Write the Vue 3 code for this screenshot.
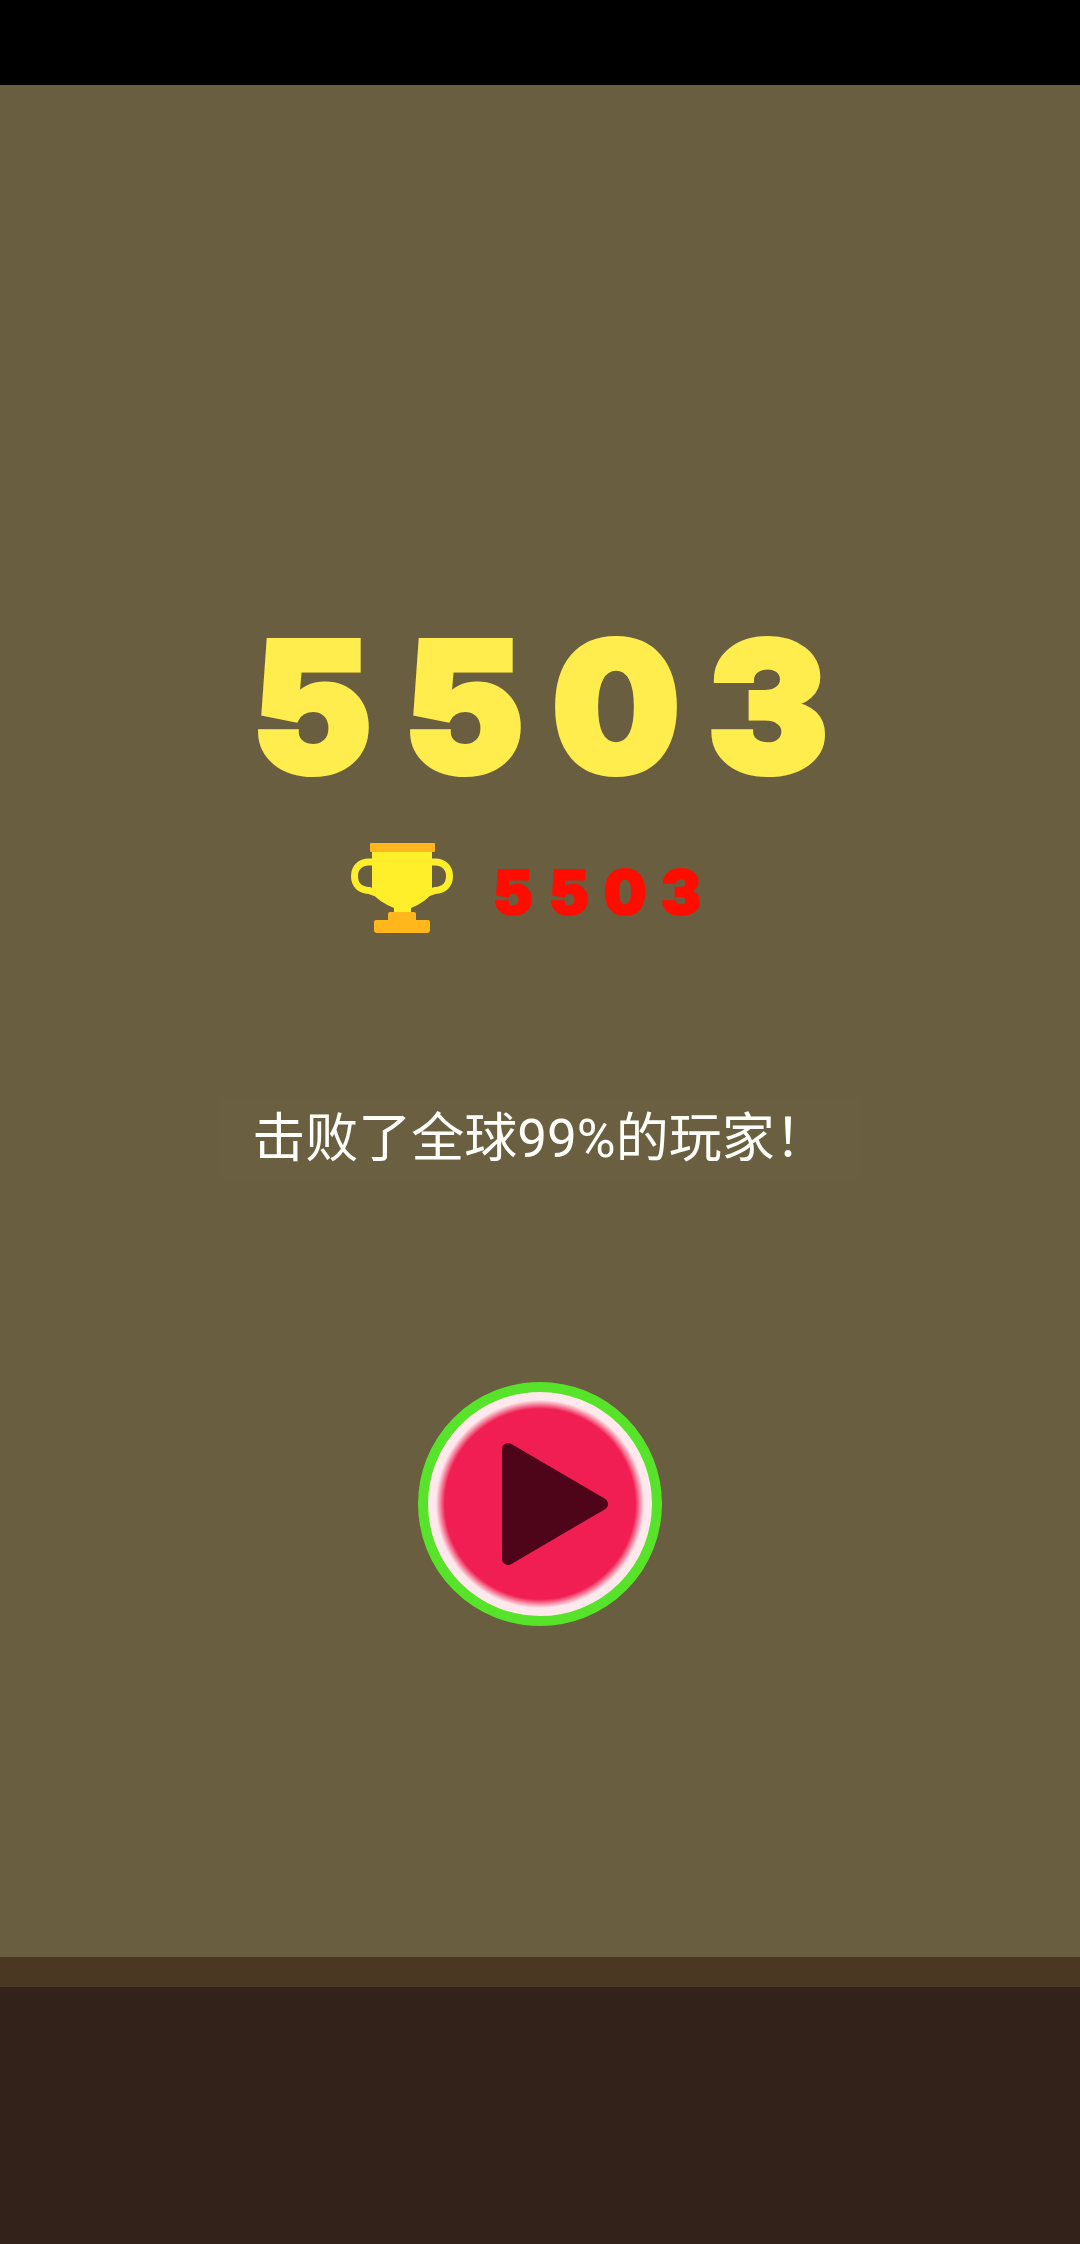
<script setup>
const score = 5503
const best = 5503
const digits = (value) => String(value).split('')
</script>

<template>
  <div class="screen">
    <div class="status-bar"></div>
    <main class="stage">
      <h1 class="score"><span v-for="(d, i) in digits(score)" :key="i">{{ d }}</span></h1>
      <div class="best">
        <svg class="trophy" viewBox="0 0 102 90" aria-hidden="true">
          <g fill="none" stroke="#ffef2b" stroke-width="7">
            <path d="M23 19H18C9 19 3.500 25 3.500 33C3.500 42 9 47 18 47.500L25 50" />
            <path d="M79 19H84C93 19 98.500 25 98.500 33C98.500 42 93 47 84 47.500L77 50" />
          </g>
          <path fill="#ffef2b" d="M21 7H81V50Q75 59 60 65V71H43V65Q28 59 21 50Z" />
          <rect x="19" width="65" height="9" rx="1" fill="#ffb71c" />
          <path fill="#ffb71c" d="M39 69H63Q65 69 65 71V77H77Q79 77 79 79V87Q79 90 76 90H26Q23 90 23 87V79Q23 77 25 77H37V71Q37 69 39 69Z" />
        </svg>
        <p class="best-score"><span v-for="(d, i) in digits(best)" :key="i">{{ d }}</span></p>
      </div>
      <p class="rank">击败了全球99%的玩家！</p>
      <button class="play" type="button" aria-label="Play">
        <svg viewBox="0 0 106 122" aria-hidden="true">
          <path d="M6 6L100 61L6 116Z" fill="#4e0519" stroke="#4e0519" stroke-width="12" stroke-linejoin="round" />
        </svg>
      </button>
    </main>
    <div class="ledge"></div>
    <div class="ground"></div>
  </div>
</template>

<style>
body {
  margin: 0;
  background: #695e40;
}
</style>

<style scoped>
.screen {
  display: flex;
  flex-direction: column;
  min-height: 100vh;
  background: #695e40;
}

.status-bar {
  height: 85px;
  background: #000;
}

.stage {
  flex: 1;
  display: flex;
  flex-direction: column;
  align-items: center;
  padding-top: 520px;
}

.score,
.best-score {
  display: flex;
  margin: 0;
  font-family: Inter, sans-serif;
  font-weight: 900;
  text-align: center;
  -webkit-text-stroke-color: currentColor;
  stroke-linejoin: round;
}

.score {
  font-size: 180px;
  line-height: 204px;
  color: #ffed4d;
  -webkit-text-stroke-width: 6px;
}

.score span {
  width: 152px;
}

.best {
  display: flex;
  align-items: center;
  gap: 32px;
  margin-top: 34px;
  padding-right: 20px;
}

.trophy {
  width: 102px;
  height: 90px;
}

.best-score {
  padding-top: 8px;
  font-size: 60px;
  line-height: 80px;
  color: #ff0d00;
  -webkit-text-stroke-width: 2px;
}

.best-score span {
  width: 56px;
}

.rank {
  margin: 166px 0 0;
  padding: 0 32px;
  font-family: Roboto, "Noto Sans CJK SC", sans-serif;
  font-size: 53px;
  line-height: 81px;
  color: #fffefa;
  background: #6a6041;
}

.play {
  display: flex;
  align-items: center;
  justify-content: center;
  box-sizing: border-box;
  width: 244px;
  height: 244px;
  margin-top: 202px;
  padding: 0 0 0 30px;
  border: 10px solid #57e329;
  border-radius: 50%;
  background: radial-gradient(circle closest-side, #f01e52 85%, #ffe9ec 93%);
  cursor: pointer;
}

.play svg {
  width: 106px;
  height: 122px;
}

.ledge {
  height: 30px;
  background: #4a3822;
}

.ground {
  height: 257px;
  background: #332219;
}
</style>
